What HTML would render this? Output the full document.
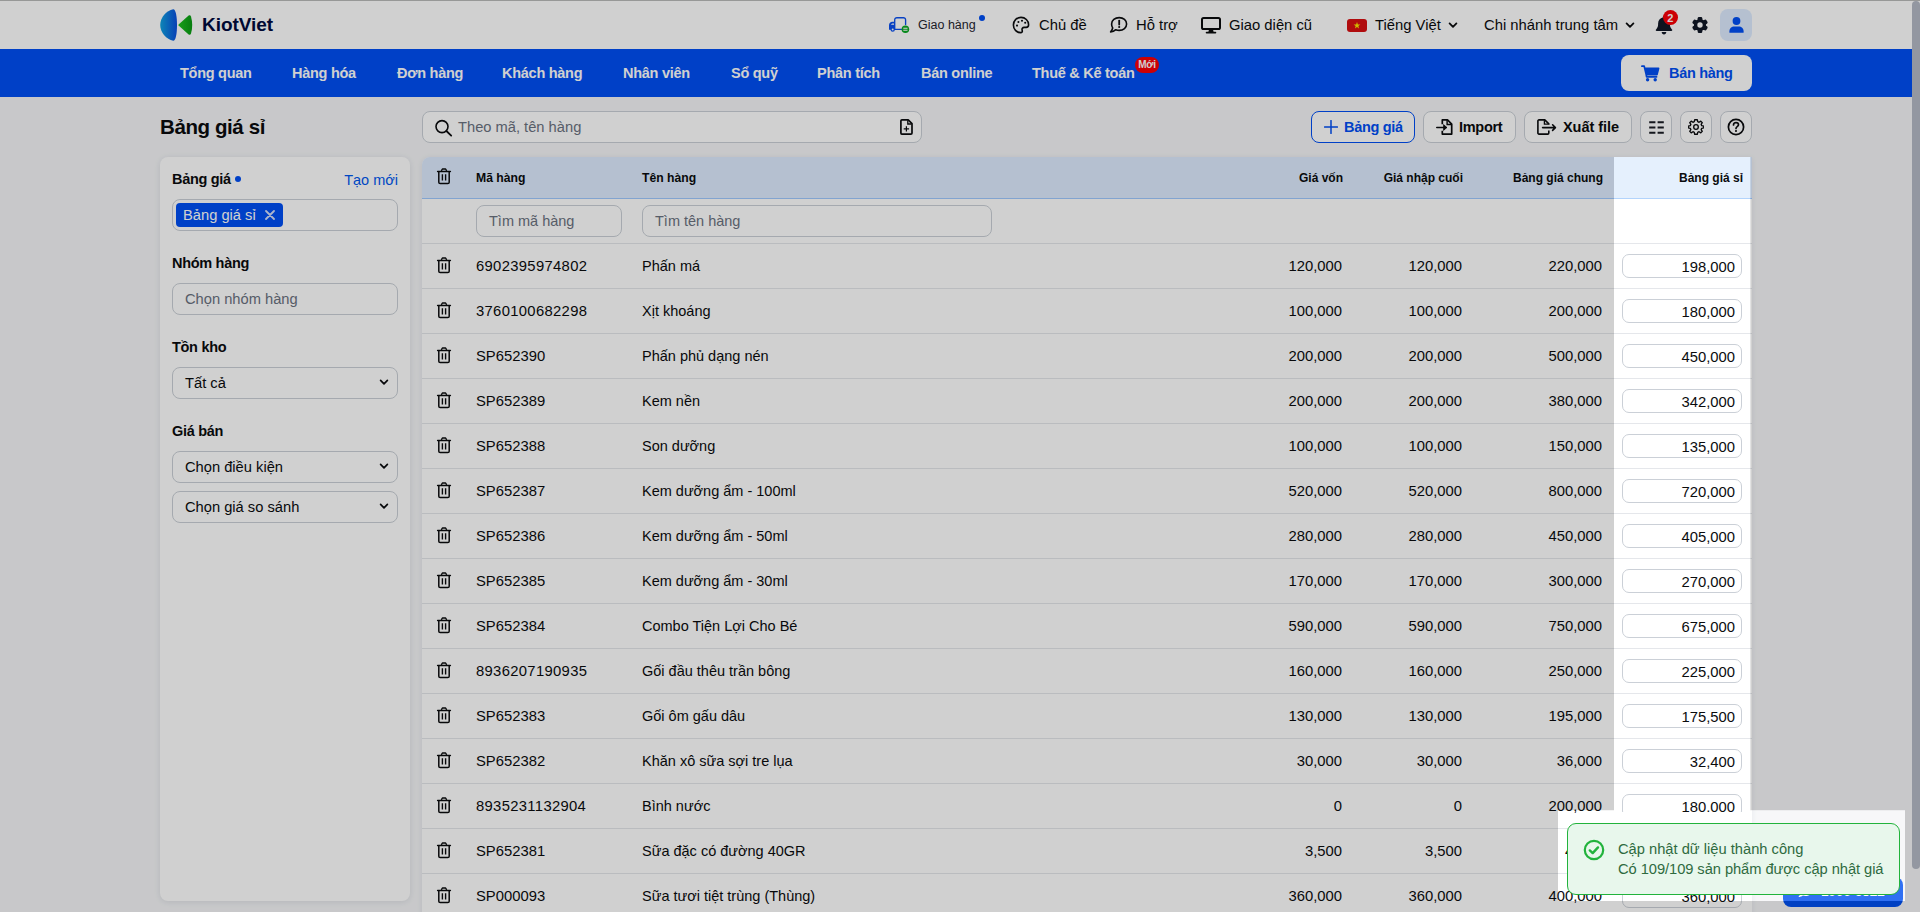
<!DOCTYPE html>
<html lang="vi">
<head>
<meta charset="utf-8">
<title>Bảng giá sỉ - KiotViet</title>
<style>
*{box-sizing:border-box}
html,body{margin:0;padding:0}
body{width:1920px;height:912px;overflow:hidden;position:relative;background:#f5f6f8;color:#0b0c0e;
 font-family:"Liberation Sans",Arial,sans-serif;font-size:14.8px;line-height:1}
.abs{position:absolute}
svg{display:block}
/* ---------- top header ---------- */
#topline{position:absolute;left:0;top:0;width:1920px;height:1px;background:#b9bbba}
#hdr{position:absolute;left:0;top:1px;width:1920px;height:48px;background:#fff}
#hdr .t{position:absolute;top:0;height:48px;line-height:48px;white-space:nowrap;font-size:14.8px;color:#0b0c0e}
#hdr .ic{position:absolute}
#nav{position:absolute;left:0;top:49px;width:1920px;height:48px;background:#004ff4}
#nav .m{position:absolute;top:0;height:48px;line-height:48px;font-weight:700;font-size:14.5px;letter-spacing:-.27px;color:#fff;white-space:nowrap}
#nav .badge{position:absolute;left:1135px;top:8px;width:24px;height:16px;border-radius:8px;background:#fb0007;color:#fff;font-size:10px;line-height:16px;text-align:center;letter-spacing:-.2px}
#sell{position:absolute;left:1621px;top:6px;width:131px;height:36px;border-radius:8px;background:#fff}
#sell span{position:absolute;left:48px;top:0;line-height:36px;font-weight:700;font-size:14.5px;letter-spacing:-.3px;color:#004ff4;white-space:nowrap}
/* ---------- toolbar ---------- */
#title{position:absolute;left:160px;top:111px;height:32px;line-height:32px;font-size:20.5px;letter-spacing:-.4px;font-weight:700;color:#0b0c0e;white-space:nowrap}
#search{position:absolute;left:422px;top:111px;width:500px;height:32px;border:1px solid #cbd0d7;border-radius:8px;background:#fff}
#search span{position:absolute;left:35px;top:0;line-height:30px;color:#6b7280;font-size:14.7px;white-space:nowrap}
.btn{position:absolute;top:111px;height:32px;border:1px solid #cbd0d7;border-radius:8px;background:#fff;font-weight:700;font-size:14.5px;letter-spacing:-.3px;color:#0b0c0e;white-space:nowrap}
.btn span{position:absolute;top:0;line-height:30px}
.btn.pri{border-color:#004ff4;color:#004ff4}
/* ---------- sidebar ---------- */
#side{position:absolute;left:160px;top:157px;width:250px;height:744px;border-radius:8px;background:#fff;box-shadow:0 1px 6px rgba(20,30,60,.10)}
#side .lb{position:absolute;left:12px;font-weight:700;font-size:14.5px;letter-spacing:-.3px;line-height:20px;white-space:nowrap}
#side .fld{position:absolute;left:12px;width:226px;height:32px;border:1px solid #cbd0d7;border-radius:8px;background:#fff}
#side .fld span{position:absolute;left:12px;top:0;line-height:30px;font-size:14.7px;white-space:nowrap}
#side .fld .ph{color:#6b7280}
#side .fld svg{position:absolute;right:8px;top:11px}
/* ---------- table ---------- */
#tbl{position:absolute;left:422px;top:157px;width:1330px;height:760px;background:#fff;border-radius:8px 0 0 0;overflow:hidden;box-shadow:0 1px 6px rgba(20,30,60,.08)}
#th{position:absolute;left:0;top:0;width:1330px;height:42px;background:#deecff;border-bottom:1px solid #a0caff}
#th .hl{position:absolute;left:1192px;top:0;width:136.4px;height:42px;background:#e5f0fd;border-bottom:1px solid #b3d4fc}
#th span{position:absolute;top:0;line-height:42px;font-weight:700;font-size:12.2px;white-space:nowrap;color:#0b0c0e}
.r{position:absolute;left:0;width:1330px;height:45px;border-bottom:1px solid #e5e7eb}
.r span{position:absolute;top:0;line-height:45px;white-space:nowrap;font-size:14.8px}
.r .c1{left:54px}.r .c1.d{letter-spacing:.33px}.r .c2{left:220px;font-size:14.5px}
.r .n1{right:410px}.r .n2{right:290px}.r .n3{right:150px}
.r i{position:absolute;left:1200px;top:10px;width:120px;height:24px;border:1px solid #cbd0d7;border-radius:7px;background:#fff;font-style:normal;text-align:right;padding-right:6px;line-height:24px;font-size:14.8px}
.r svg{position:absolute;left:14px;top:12.5px}
.finp{position:absolute;top:6px;height:32px;border:1px solid #cbd0d7;border-radius:8px;background:#fff}
.finp span{left:12px;line-height:30px!important;color:#6b7280;font-size:14.5px!important}
/* ---------- overlay / toast ---------- */
#dim{position:absolute;left:0;top:0;width:1920px;height:912px;background:rgba(0,0,0,.184);
 clip-path:path(evenodd,"M0 0H1920V912H0Z M1614 157H1750.4V810.3H1905V901H1558V810.3H1614Z")}
#lit{position:absolute;left:0;top:0;width:1920px;height:912px;background:rgba(255,255,255,.19);
 clip-path:path("M1750.4 810.3H1905V901H1750.4Z")}
#patch{position:absolute;left:1614px;top:811.6px;width:136.4px;height:12px;background:#fff}
#thumb{position:absolute;left:1912px;top:1px;width:8px;height:868px;border-radius:4px 4px 4px 4px;background:#9397a1}
#toast{position:absolute;left:1567px;top:823px;width:333px;height:72px;border:1px solid #22b33c;border-radius:9px;background:#e8f7ec;color:#2f6b3f}
#toast span{position:absolute;left:50px;white-space:nowrap;font-size:14.7px;line-height:20px}
#chat{position:absolute;left:1783px;top:877px;width:120px;height:30px;border-radius:8px;background:#004ff0;color:#fff}
</style>
</head>
<body>
<div id="topline"></div>
<div id="hdr">
  <!-- logo -->
  <svg class="ic" style="left:159px;top:7px" width="36" height="34" viewBox="0 0 36 34">
    <defs>
      <linearGradient id="lgb" x1="0" y1="0.5" x2="1" y2="0.5"><stop offset="0" stop-color="#11a3e0"/><stop offset="1" stop-color="#0a4fe0"/></linearGradient>
      <linearGradient id="lgg" x1="0" y1="0.5" x2="1" y2="0.5"><stop offset="0" stop-color="#1fc21f"/><stop offset="1" stop-color="#0a9a14"/></linearGradient>
    </defs>
    <path d="M14.2 1.2 C16.6 1.0 18.0 8 18.0 17 C18.0 26 16.6 33 14.2 32.8 C7.5 31.5 1.2 24.5 1.2 17 C1.2 9.5 7.5 2.5 14.2 1.2Z" fill="url(#lgb)"/>
    <path d="M19.6 17.6 C19.2 17.2 19.2 16.8 19.6 16.4 L29.6 7.6 C30.6 6.8 31.6 7.2 32 8.4 C33.6 13.6 33.6 20.4 32 25.6 C31.6 26.8 30.6 27.2 29.6 26.4Z" fill="url(#lgg)"/>
  </svg>
  <span class="t" id="brand" style="left:202px;font-weight:700;font-size:19px;color:#000a3d;letter-spacing:-.05px">KiotViet</span>

  <!-- giao hang -->
  <svg class="ic" style="left:888px;top:15px" width="22" height="18" viewBox="0 0 22 18" fill="none">
    <path d="M6.7 13.4 V3.9 a2.2 2.2 0 0 1 2.2-2.2 H15.4 a2.2 2.2 0 0 1 2.2 2.2 V8.6 M6.7 13.4 H13.6" stroke="#0a50f0" stroke-width="1.35" stroke-linecap="round"/>
    <path d="M6.4 5.8 H4.3 C2.6 5.8 1 7.4 1 9.1 V13.7 H6.4Z" fill="#0a50f0"/>
    <path d="M2.8 8.7 L4.1 7.4 H6 V8.7Z" fill="#fff"/>
    <circle cx="4.7" cy="13.5" r="2.2" fill="#0a50f0"/><circle cx="4.7" cy="13.5" r=".95" fill="#fff"/>
    <circle cx="17.4" cy="13.2" r="3.8" fill="#08a822"/>
    <path d="M15.3 12.3 H19.5 M15.3 14.2 H19.5" stroke="#fff" stroke-width="1.1"/>
  </svg>
  <span class="t" id="h1" style="left:918px;font-size:12.5px;color:#1f2630;top:0">Giao hàng</span>
  <div class="abs" style="left:979px;top:14px;width:6px;height:6px;border-radius:3px;background:#004ff4"></div>

  <!-- chu de -->
  <svg class="ic" style="left:1012px;top:15px" width="18" height="18" viewBox="0 0 18 18" fill="none">
    <path d="M9 1.4 C4.6 1.4 1.4 4.8 1.4 9 C1.4 13.2 4.6 16.6 8.6 16.6 C10 16.6 10.6 15.6 10.2 14.4 C9.6 12.8 10.6 11.4 12.2 11.4 H14.2 C15.8 11.4 16.6 10.4 16.6 8.8 C16.6 4.6 13.2 1.4 9 1.4Z" stroke="#0b0c0e" stroke-width="1.6"/>
    <circle cx="5" cy="9.6" r="1.05" fill="#0b0c0e"/><circle cx="6.4" cy="6" r="1.05" fill="#0b0c0e"/><circle cx="10" cy="4.7" r="1.05" fill="#0b0c0e"/><circle cx="13.2" cy="6.8" r="1.05" fill="#0b0c0e"/>
  </svg>
  <span class="t" id="h2" style="left:1039px">Chủ đề</span>

  <!-- ho tro -->
  <svg class="ic" style="left:1109px;top:15px" width="19" height="18" viewBox="0 0 19 18" fill="none">
    <path d="M10.2 1.6 C14.4 1.6 17.6 4.4 17.6 8 C17.6 11.6 14.4 14.4 10.2 14.4 C9 14.4 7.8 14.2 6.8 13.7 C5.6 14.8 3.8 15.8 1.6 16 C2.6 14.8 3.4 13.4 3.7 12 C2.9 10.9 2.6 9.5 2.6 8 C2.6 4.4 6 1.6 10.2 1.6Z" stroke="#0b0c0e" stroke-width="1.6" stroke-linejoin="round"/>
    <path d="M10.2 4.6 V8.6" stroke="#0b0c0e" stroke-width="1.8" stroke-linecap="round"/><circle cx="10.2" cy="11" r="1.05" fill="#0b0c0e"/>
  </svg>
  <span class="t" id="h3" style="left:1136px">Hỗ trợ</span>

  <!-- giao dien cu -->
  <svg class="ic" style="left:1201px;top:16px" width="20" height="17" viewBox="0 0 20 17" fill="none">
    <rect x="1" y="1" width="18" height="11" rx="1.6" stroke="#0b0c0e" stroke-width="2"/>
    <path d="M8 12.4 L7.4 15 H12.6 L12 12.4Z" fill="#0b0c0e"/><path d="M5.6 15.6 H14.4" stroke="#0b0c0e" stroke-width="1.8" stroke-linecap="round"/>
  </svg>
  <span class="t" id="h4" style="left:1229px">Giao diện cũ</span>

  <!-- language -->
  <svg class="ic" style="left:1347px;top:18px" width="20" height="13" viewBox="0 0 20 13">
    <rect width="20" height="13" rx="3" fill="#d80f12"/>
    <path d="M10 3.1 L10.85 5.55 H13.4 L11.35 7.1 L12.1 9.6 L10 8.1 L7.9 9.6 L8.65 7.1 L6.6 5.55 H9.15Z" fill="#ffe500"/>
  </svg>
  <span class="t" id="h5" style="left:1375px">Tiếng Việt</span>
  <svg class="ic" style="left:1448px;top:21px" width="10" height="7" viewBox="0 0 10 7" fill="none"><path d="M1.6 1.4 L5 4.8 L8.4 1.4" stroke="#0b0c0e" stroke-width="1.8" stroke-linecap="round" stroke-linejoin="round"/></svg>
  <span class="t" id="h6" style="left:1484px">Chi nhánh trung tâm</span>
  <svg class="ic" style="left:1625px;top:21px" width="10" height="7" viewBox="0 0 10 7" fill="none"><path d="M1.6 1.4 L5 4.8 L8.4 1.4" stroke="#0b0c0e" stroke-width="1.8" stroke-linecap="round" stroke-linejoin="round"/></svg>

  <!-- bell -->
  <svg class="ic" style="left:1655px;top:14px" width="18" height="20" viewBox="0 0 18 20">
    <path d="M9 .8 a1.2 1.2 0 0 1 1.2 1.2 v.5 c2.7 .6 4.7 3 4.7 5.9 v.9 c0 1.9 .6 3.6 1.8 4.9 l.3 .3 c.6 .7 .1 1.4 -.6 1.4 H1.6 c-.7 0 -1.2 -.7 -.6 -1.4 l.3 -.3 c1.2 -1.3 1.8 -3 1.8 -4.9 v-.9 c0 -2.9 2 -5.3 4.7 -5.9 v-.5 A1.2 1.2 0 0 1 9 .8Z M6.7 17 h4.6 c0 1.4 -1 2.5 -2.3 2.5 s-2.3 -1.1 -2.3 -2.5Z" fill="#111827"/>
  </svg>
  <div class="abs" style="left:1662.9px;top:9.4px;width:15px;height:15px;border-radius:7.5px;background:#fb0007;color:#fff;font-size:11px;line-height:16px;text-align:center;font-weight:700">2</div>

  <!-- gear -->
  <svg class="ic" style="left:1691.2px;top:15px" width="18" height="18" viewBox="-9 -9 18 18">
    <g fill="#111827"><circle r="6.1"/><rect x="-2.3" y="-8" width="4.6" height="16" rx="1.3"/><rect x="-2.3" y="-8" width="4.6" height="16" rx="1.3" transform="rotate(60)"/><rect x="-2.3" y="-8" width="4.6" height="16" rx="1.3" transform="rotate(120)"/></g>
    <circle r="2.7" fill="#fff"/>
  </svg>

  <!-- avatar -->
  <div class="abs" style="left:1720px;top:8px;width:32px;height:32px;border-radius:8px;background:#deecff"></div>
  <svg class="ic" style="left:1729px;top:16px" width="15" height="16" viewBox="0 0 15 16">
    <circle cx="7.5" cy="4" r="3.9" fill="#004ff4"/><path d="M.4 15.8 V14.2 C.4 11.4 2.6 9.4 5.4 9.4 H9.6 C12.4 9.4 14.6 11.4 14.6 14.2 V15.8Z" fill="#004ff4"/>
  </svg>
</div>

<div id="nav">
  <span class="m" id="m1" style="left:180px">Tổng quan</span>
  <span class="m" id="m2" style="left:292px">Hàng hóa</span>
  <span class="m" id="m3" style="left:397px">Đơn hàng</span>
  <span class="m" id="m4" style="left:502px">Khách hàng</span>
  <span class="m" id="m5" style="left:623px">Nhân viên</span>
  <span class="m" id="m6" style="left:731px">Sổ quỹ</span>
  <span class="m" id="m7" style="left:817px">Phân tích</span>
  <span class="m" id="m8" style="left:921px">Bán online</span>
  <span class="m" id="m9" style="left:1032px">Thuế &amp; Kế toán</span>
  <div class="badge"><b>Mới</b></div>
  <div id="sell">
    <svg class="abs" style="left:20px;top:10px" width="19" height="17" viewBox="0 0 19 17">
      <path d="M.9 1.2 H3.2 L3.7 3.4 M3.7 3.4 H17.6 L16 9.6 H5.2 Z M5.2 9.6 L5.6 11.8 H15.6" fill="none" stroke="#004ff4" stroke-width="1.7" stroke-linecap="round" stroke-linejoin="round"/>
      <path d="M3.9 3.6 H17.4 L15.9 9.4 H5.3Z" fill="#004ff4"/>
      <circle cx="6.6" cy="14.8" r="1.7" fill="#004ff4"/><circle cx="14.2" cy="14.8" r="1.7" fill="#004ff4"/>
    </svg>
    <span id="sellt">Bán hàng</span>
  </div>
</div>
<div id="title">Bảng giá sỉ</div>
<div id="search">
  <svg class="abs" style="left:11px;top:7px" width="19" height="18" viewBox="0 0 19 18" fill="none"><circle cx="8" cy="7.6" r="6" stroke="#0b0c0e" stroke-width="1.6"/><path d="M12.4 12 L17.2 16.6" stroke="#0b0c0e" stroke-width="1.8" stroke-linecap="round"/></svg>
  <span id="st">Theo mã, tên hàng</span>
  <svg class="abs" style="left:477px;top:7px" width="13" height="16" viewBox="0 0 13 16" fill="none"><path d="M1.9 .9 H8.2 L12 4.7 V14 a1.1 1.1 0 0 1-1.1 1.1 H1.9 A1.1 1.1 0 0 1 .9 14 V1.9 A1.1 1.1 0 0 1 1.9 .9Z" stroke="#0b0c0e" stroke-width="1.7" stroke-linejoin="round"/><path d="M7.8 1.2 V5 H11.6" stroke="#0b0c0e" stroke-width="1.3"/><path d="M6.4 7.2 V12.6 M3.7 9.9 H9.1" stroke="#0b0c0e" stroke-width="1.2"/></svg>
</div>

<div class="btn pri" style="left:1311px;width:104px">
  <svg class="abs" style="left:12px;top:8px" width="14" height="14" viewBox="0 0 14 14"><path d="M7 .6 V13.4 M.6 7 H13.4" stroke="#004ff4" stroke-width="1.5" stroke-linecap="round"/></svg>
  <span id="b1" style="left:32px">Bảng giá</span>
</div>
<div class="btn" style="left:1423px;width:93px">
  <svg class="abs" style="left:12px;top:7px" width="17" height="16" viewBox="0 0 17 16" fill="none"><path d="M6.3 5.3 V.9 H11.5 L15.7 5.1 V15.1 H6.3 V11.7" stroke="#0b0c0e" stroke-width="1.7" stroke-linejoin="round"/><path d="M11.1 1.1 V5.5 H15.5" stroke="#0b0c0e" stroke-width="1.4"/><path d="M.8 8.5 H10.2" stroke="#0b0c0e" stroke-width="1.6" stroke-linecap="round"/><path d="M7.6 5.6 L10.8 8.5 L7.6 11.4Z" fill="#0b0c0e" stroke="#0b0c0e" stroke-width=".8" stroke-linejoin="round"/></svg>
  <span id="b2" style="left:35px">Import</span>
</div>
<div class="btn" style="left:1524px;width:108px">
  <svg class="abs" style="left:12px;top:7px" width="20" height="16" viewBox="0 0 20 16" fill="none"><path d="M11.8 11.4 V14 a1.1 1.1 0 0 1-1.1 1.1 H2 A1.1 1.1 0 0 1 .9 14 V2 A1.1 1.1 0 0 1 2 .9 H7.8 L11.8 4.9 V5.8" stroke="#0b0c0e" stroke-width="1.6" stroke-linejoin="round"/><path d="M7.4 1.2 V5.2 H11.4" stroke="#0b0c0e" stroke-width="1.3"/><path d="M5.6 8.6 H18.4 M15.6 5.8 L18.4 8.6 L15.6 11.4" stroke="#0b0c0e" stroke-width="1.6" stroke-linecap="round" stroke-linejoin="round"/></svg>
  <span id="b3" style="left:38px;letter-spacing:-.05px">Xuất file</span>
</div>
<div class="btn" style="left:1640px;width:32px">
  <svg class="abs" style="left:8px;top:9px" width="15" height="13" viewBox="0 0 15 13"><path d="M.2 1.2 H6.4 M8.6 1.2 H14.8 M.2 6.5 H6.4 M8.6 6.5 H14.8 M.2 11.8 H6.4 M8.6 11.8 H14.8" stroke="#1a1d24" stroke-width="1.9"/></svg>
</div>
<div class="btn" style="left:1680px;width:32px">
  <svg class="abs" style="left:7px;top:7px" width="16" height="16" viewBox="0 0 18 18" fill="none">
    <path d="M7.55 1.3 H10.45 L10.95 3.55 L12.45 4.2 L14.4 2.95 L16.05 4.6 L14.8 6.55 L15.45 8.05 L17.7 8.55 V9.45 10.45 L15.45 10.95 L14.8 12.45 L16.05 14.4 L14.4 16.05 L12.45 14.8 L10.95 15.45 L10.45 17.7 H7.55 L7.05 15.45 L5.55 14.8 L3.6 16.05 L1.95 14.4 L3.2 12.45 L2.55 10.95 L.3 10.45 V8.55 L2.55 8.05 L3.2 6.55 L1.95 4.6 L3.6 2.95 L5.55 4.2 L7.05 3.55Z" stroke="#0b0c0e" stroke-width="1.5" stroke-linejoin="round" transform="translate(0 -.5)"/>
    <circle cx="9" cy="9" r="2.6" stroke="#0b0c0e" stroke-width="1.5"/>
  </svg>
</div>
<div class="btn" style="left:1720px;width:32px">
  <svg class="abs" style="left:6px;top:6px" width="18" height="18" viewBox="0 0 18 18" fill="none"><circle cx="9" cy="9" r="7.6" stroke="#0b0c0e" stroke-width="1.7"/><path d="M6.5 6.9 C6.5 5.4 7.6 4.6 9 4.6 C10.4 4.6 11.5 5.5 11.5 6.8 C11.5 8.6 9 8.6 9 10.4" stroke="#0b0c0e" stroke-width="1.7" stroke-linecap="round"/><circle cx="9" cy="13" r="1.05" fill="#0b0c0e"/></svg>
</div>

<div id="side">
  <span class="lb" id="s1" style="top:12px">Bảng giá</span>
  <div class="abs" style="left:75px;top:19px;width:6px;height:6px;border-radius:3px;background:#004ff4"></div>
  <span class="abs" id="s2" style="right:12px;top:13px;line-height:20px;font-size:14.5px;color:#0058f0;white-space:nowrap">Tạo mới</span>
  <div class="fld" style="top:42px">
    <div class="abs" style="left:3px;top:3px;width:107px;height:24px;border-radius:4px;background:#004ff4"></div>
    <span id="s3" style="left:10px;color:#fff;line-height:30px">Bảng giá sỉ</span>
    <svg style="left:92px;top:10px;right:auto" width="10" height="10" viewBox="0 0 10 10"><path d="M1 1 L9 9 M9 1 L1 9" stroke="#d4defa" stroke-width="1.8" stroke-linecap="round"/></svg>
  </div>
  <span class="lb" id="s4" style="top:96px">Nhóm hàng</span>
  <div class="fld" style="top:126px"><span class="ph" id="s5">Chọn nhóm hàng</span></div>
  <span class="lb" id="s6" style="top:180px">Tồn kho</span>
  <div class="fld" style="top:210px"><span id="s7">Tất cả</span><svg width="10" height="7" viewBox="0 0 10 7" fill="none"><path d="M1.6 1.4 L5 4.8 L8.4 1.4" stroke="#0b0c0e" stroke-width="1.7" stroke-linecap="round" stroke-linejoin="round"/></svg></div>
  <span class="lb" id="s8" style="top:264px">Giá bán</span>
  <div class="fld" style="top:294px"><span id="s9">Chọn điều kiện</span><svg width="10" height="7" viewBox="0 0 10 7" fill="none"><path d="M1.6 1.4 L5 4.8 L8.4 1.4" stroke="#0b0c0e" stroke-width="1.7" stroke-linecap="round" stroke-linejoin="round"/></svg></div>
  <div class="fld" style="top:334px"><span id="s10">Chọn giá so sánh</span><svg width="10" height="7" viewBox="0 0 10 7" fill="none"><path d="M1.6 1.4 L5 4.8 L8.4 1.4" stroke="#0b0c0e" stroke-width="1.7" stroke-linecap="round" stroke-linejoin="round"/></svg></div>
</div>
<div id="tbl">
<div id="th"><svg class="abs" style="left:14px;top:10.5px" width="16" height="17" viewBox="0 0 16 17" fill="none"><path d="M5.3 2.9 L6.4 1 H9.6 L10.7 2.9" stroke="#0b0c0e" stroke-width="1.4" stroke-linejoin="round"/><path d="M1.6 3.6 H14.4" stroke="#0b0c0e" stroke-width="1.5" stroke-linecap="round"/><path d="M2.8 4 V14.2 a1.4 1.4 0 0 0 1.4 1.4 H11.8 a1.4 1.4 0 0 0 1.4-1.4 V4" stroke="#0b0c0e" stroke-width="1.5"/><path d="M6.4 6.3 V12.5 M9.6 6.3 V12.5" stroke="#0b0c0e" stroke-width="1.4"/></svg><div class="hl"></div><span id="t1" style="left:54px">Mã hàng</span><span id="t2" style="left:220px">Tên hàng</span><span id="t3" style="right:409px;font-size:12px">Giá vốn</span><span id="t4" style="right:289px;font-size:12px">Giá nhập cuối</span><span id="t5" style="right:149px;font-size:12px">Bảng giá chung</span><span id="t6" style="right:9px;font-size:12px">Bảng giá sỉ</span></div>
<div class="r" style="top:42px"><div class="finp" style="left:54px;width:146px"><span id="f1">Tìm mã hàng</span></div><div class="finp" style="left:220px;width:350px"><span id="f2">Tìm tên hàng</span></div></div>
<div class="r" style="top:87px"><svg width="16" height="17" viewBox="0 0 16 17" fill="none"><path d="M5.3 2.9 L6.4 1 H9.6 L10.7 2.9" stroke="#0b0c0e" stroke-width="1.4" stroke-linejoin="round"/><path d="M1.6 3.6 H14.4" stroke="#0b0c0e" stroke-width="1.5" stroke-linecap="round"/><path d="M2.8 4 V14.2 a1.4 1.4 0 0 0 1.4 1.4 H11.8 a1.4 1.4 0 0 0 1.4-1.4 V4" stroke="#0b0c0e" stroke-width="1.5"/><path d="M6.4 6.3 V12.5 M9.6 6.3 V12.5" stroke="#0b0c0e" stroke-width="1.4"/></svg><span class="c1 d">6902395974802</span><span class="c2">Phấn má</span><span class="n1">120,000</span><span class="n2">120,000</span><span class="n3">220,000</span><i>198,000</i></div>
<div class="r" style="top:132px"><svg width="16" height="17" viewBox="0 0 16 17" fill="none"><path d="M5.3 2.9 L6.4 1 H9.6 L10.7 2.9" stroke="#0b0c0e" stroke-width="1.4" stroke-linejoin="round"/><path d="M1.6 3.6 H14.4" stroke="#0b0c0e" stroke-width="1.5" stroke-linecap="round"/><path d="M2.8 4 V14.2 a1.4 1.4 0 0 0 1.4 1.4 H11.8 a1.4 1.4 0 0 0 1.4-1.4 V4" stroke="#0b0c0e" stroke-width="1.5"/><path d="M6.4 6.3 V12.5 M9.6 6.3 V12.5" stroke="#0b0c0e" stroke-width="1.4"/></svg><span class="c1 d">3760100682298</span><span class="c2">Xịt khoáng</span><span class="n1">100,000</span><span class="n2">100,000</span><span class="n3">200,000</span><i>180,000</i></div>
<div class="r" style="top:177px"><svg width="16" height="17" viewBox="0 0 16 17" fill="none"><path d="M5.3 2.9 L6.4 1 H9.6 L10.7 2.9" stroke="#0b0c0e" stroke-width="1.4" stroke-linejoin="round"/><path d="M1.6 3.6 H14.4" stroke="#0b0c0e" stroke-width="1.5" stroke-linecap="round"/><path d="M2.8 4 V14.2 a1.4 1.4 0 0 0 1.4 1.4 H11.8 a1.4 1.4 0 0 0 1.4-1.4 V4" stroke="#0b0c0e" stroke-width="1.5"/><path d="M6.4 6.3 V12.5 M9.6 6.3 V12.5" stroke="#0b0c0e" stroke-width="1.4"/></svg><span class="c1">SP652390</span><span class="c2">Phấn phủ dạng nén</span><span class="n1">200,000</span><span class="n2">200,000</span><span class="n3">500,000</span><i>450,000</i></div>
<div class="r" style="top:222px"><svg width="16" height="17" viewBox="0 0 16 17" fill="none"><path d="M5.3 2.9 L6.4 1 H9.6 L10.7 2.9" stroke="#0b0c0e" stroke-width="1.4" stroke-linejoin="round"/><path d="M1.6 3.6 H14.4" stroke="#0b0c0e" stroke-width="1.5" stroke-linecap="round"/><path d="M2.8 4 V14.2 a1.4 1.4 0 0 0 1.4 1.4 H11.8 a1.4 1.4 0 0 0 1.4-1.4 V4" stroke="#0b0c0e" stroke-width="1.5"/><path d="M6.4 6.3 V12.5 M9.6 6.3 V12.5" stroke="#0b0c0e" stroke-width="1.4"/></svg><span class="c1">SP652389</span><span class="c2">Kem nền</span><span class="n1">200,000</span><span class="n2">200,000</span><span class="n3">380,000</span><i>342,000</i></div>
<div class="r" style="top:267px"><svg width="16" height="17" viewBox="0 0 16 17" fill="none"><path d="M5.3 2.9 L6.4 1 H9.6 L10.7 2.9" stroke="#0b0c0e" stroke-width="1.4" stroke-linejoin="round"/><path d="M1.6 3.6 H14.4" stroke="#0b0c0e" stroke-width="1.5" stroke-linecap="round"/><path d="M2.8 4 V14.2 a1.4 1.4 0 0 0 1.4 1.4 H11.8 a1.4 1.4 0 0 0 1.4-1.4 V4" stroke="#0b0c0e" stroke-width="1.5"/><path d="M6.4 6.3 V12.5 M9.6 6.3 V12.5" stroke="#0b0c0e" stroke-width="1.4"/></svg><span class="c1">SP652388</span><span class="c2">Son dưỡng</span><span class="n1">100,000</span><span class="n2">100,000</span><span class="n3">150,000</span><i>135,000</i></div>
<div class="r" style="top:312px"><svg width="16" height="17" viewBox="0 0 16 17" fill="none"><path d="M5.3 2.9 L6.4 1 H9.6 L10.7 2.9" stroke="#0b0c0e" stroke-width="1.4" stroke-linejoin="round"/><path d="M1.6 3.6 H14.4" stroke="#0b0c0e" stroke-width="1.5" stroke-linecap="round"/><path d="M2.8 4 V14.2 a1.4 1.4 0 0 0 1.4 1.4 H11.8 a1.4 1.4 0 0 0 1.4-1.4 V4" stroke="#0b0c0e" stroke-width="1.5"/><path d="M6.4 6.3 V12.5 M9.6 6.3 V12.5" stroke="#0b0c0e" stroke-width="1.4"/></svg><span class="c1">SP652387</span><span class="c2">Kem dưỡng ẩm - 100ml</span><span class="n1">520,000</span><span class="n2">520,000</span><span class="n3">800,000</span><i>720,000</i></div>
<div class="r" style="top:357px"><svg width="16" height="17" viewBox="0 0 16 17" fill="none"><path d="M5.3 2.9 L6.4 1 H9.6 L10.7 2.9" stroke="#0b0c0e" stroke-width="1.4" stroke-linejoin="round"/><path d="M1.6 3.6 H14.4" stroke="#0b0c0e" stroke-width="1.5" stroke-linecap="round"/><path d="M2.8 4 V14.2 a1.4 1.4 0 0 0 1.4 1.4 H11.8 a1.4 1.4 0 0 0 1.4-1.4 V4" stroke="#0b0c0e" stroke-width="1.5"/><path d="M6.4 6.3 V12.5 M9.6 6.3 V12.5" stroke="#0b0c0e" stroke-width="1.4"/></svg><span class="c1">SP652386</span><span class="c2">Kem dưỡng ẩm - 50ml</span><span class="n1">280,000</span><span class="n2">280,000</span><span class="n3">450,000</span><i>405,000</i></div>
<div class="r" style="top:402px"><svg width="16" height="17" viewBox="0 0 16 17" fill="none"><path d="M5.3 2.9 L6.4 1 H9.6 L10.7 2.9" stroke="#0b0c0e" stroke-width="1.4" stroke-linejoin="round"/><path d="M1.6 3.6 H14.4" stroke="#0b0c0e" stroke-width="1.5" stroke-linecap="round"/><path d="M2.8 4 V14.2 a1.4 1.4 0 0 0 1.4 1.4 H11.8 a1.4 1.4 0 0 0 1.4-1.4 V4" stroke="#0b0c0e" stroke-width="1.5"/><path d="M6.4 6.3 V12.5 M9.6 6.3 V12.5" stroke="#0b0c0e" stroke-width="1.4"/></svg><span class="c1">SP652385</span><span class="c2">Kem dưỡng ẩm - 30ml</span><span class="n1">170,000</span><span class="n2">170,000</span><span class="n3">300,000</span><i>270,000</i></div>
<div class="r" style="top:447px"><svg width="16" height="17" viewBox="0 0 16 17" fill="none"><path d="M5.3 2.9 L6.4 1 H9.6 L10.7 2.9" stroke="#0b0c0e" stroke-width="1.4" stroke-linejoin="round"/><path d="M1.6 3.6 H14.4" stroke="#0b0c0e" stroke-width="1.5" stroke-linecap="round"/><path d="M2.8 4 V14.2 a1.4 1.4 0 0 0 1.4 1.4 H11.8 a1.4 1.4 0 0 0 1.4-1.4 V4" stroke="#0b0c0e" stroke-width="1.5"/><path d="M6.4 6.3 V12.5 M9.6 6.3 V12.5" stroke="#0b0c0e" stroke-width="1.4"/></svg><span class="c1">SP652384</span><span class="c2">Combo Tiện Lợi Cho Bé</span><span class="n1">590,000</span><span class="n2">590,000</span><span class="n3">750,000</span><i>675,000</i></div>
<div class="r" style="top:492px"><svg width="16" height="17" viewBox="0 0 16 17" fill="none"><path d="M5.3 2.9 L6.4 1 H9.6 L10.7 2.9" stroke="#0b0c0e" stroke-width="1.4" stroke-linejoin="round"/><path d="M1.6 3.6 H14.4" stroke="#0b0c0e" stroke-width="1.5" stroke-linecap="round"/><path d="M2.8 4 V14.2 a1.4 1.4 0 0 0 1.4 1.4 H11.8 a1.4 1.4 0 0 0 1.4-1.4 V4" stroke="#0b0c0e" stroke-width="1.5"/><path d="M6.4 6.3 V12.5 M9.6 6.3 V12.5" stroke="#0b0c0e" stroke-width="1.4"/></svg><span class="c1 d">8936207190935</span><span class="c2">Gối đầu thêu trần bông</span><span class="n1">160,000</span><span class="n2">160,000</span><span class="n3">250,000</span><i>225,000</i></div>
<div class="r" style="top:537px"><svg width="16" height="17" viewBox="0 0 16 17" fill="none"><path d="M5.3 2.9 L6.4 1 H9.6 L10.7 2.9" stroke="#0b0c0e" stroke-width="1.4" stroke-linejoin="round"/><path d="M1.6 3.6 H14.4" stroke="#0b0c0e" stroke-width="1.5" stroke-linecap="round"/><path d="M2.8 4 V14.2 a1.4 1.4 0 0 0 1.4 1.4 H11.8 a1.4 1.4 0 0 0 1.4-1.4 V4" stroke="#0b0c0e" stroke-width="1.5"/><path d="M6.4 6.3 V12.5 M9.6 6.3 V12.5" stroke="#0b0c0e" stroke-width="1.4"/></svg><span class="c1">SP652383</span><span class="c2">Gối ôm gấu dâu</span><span class="n1">130,000</span><span class="n2">130,000</span><span class="n3">195,000</span><i>175,500</i></div>
<div class="r" style="top:582px"><svg width="16" height="17" viewBox="0 0 16 17" fill="none"><path d="M5.3 2.9 L6.4 1 H9.6 L10.7 2.9" stroke="#0b0c0e" stroke-width="1.4" stroke-linejoin="round"/><path d="M1.6 3.6 H14.4" stroke="#0b0c0e" stroke-width="1.5" stroke-linecap="round"/><path d="M2.8 4 V14.2 a1.4 1.4 0 0 0 1.4 1.4 H11.8 a1.4 1.4 0 0 0 1.4-1.4 V4" stroke="#0b0c0e" stroke-width="1.5"/><path d="M6.4 6.3 V12.5 M9.6 6.3 V12.5" stroke="#0b0c0e" stroke-width="1.4"/></svg><span class="c1">SP652382</span><span class="c2">Khăn xô sữa sợi tre lụa</span><span class="n1">30,000</span><span class="n2">30,000</span><span class="n3">36,000</span><i>32,400</i></div>
<div class="r" style="top:627px"><svg width="16" height="17" viewBox="0 0 16 17" fill="none"><path d="M5.3 2.9 L6.4 1 H9.6 L10.7 2.9" stroke="#0b0c0e" stroke-width="1.4" stroke-linejoin="round"/><path d="M1.6 3.6 H14.4" stroke="#0b0c0e" stroke-width="1.5" stroke-linecap="round"/><path d="M2.8 4 V14.2 a1.4 1.4 0 0 0 1.4 1.4 H11.8 a1.4 1.4 0 0 0 1.4-1.4 V4" stroke="#0b0c0e" stroke-width="1.5"/><path d="M6.4 6.3 V12.5 M9.6 6.3 V12.5" stroke="#0b0c0e" stroke-width="1.4"/></svg><span class="c1 d">8935231132904</span><span class="c2">Bình nước</span><span class="n1">0</span><span class="n2">0</span><span class="n3">200,000</span><i>180,000</i></div>
<div class="r" style="top:672px"><svg width="16" height="17" viewBox="0 0 16 17" fill="none"><path d="M5.3 2.9 L6.4 1 H9.6 L10.7 2.9" stroke="#0b0c0e" stroke-width="1.4" stroke-linejoin="round"/><path d="M1.6 3.6 H14.4" stroke="#0b0c0e" stroke-width="1.5" stroke-linecap="round"/><path d="M2.8 4 V14.2 a1.4 1.4 0 0 0 1.4 1.4 H11.8 a1.4 1.4 0 0 0 1.4-1.4 V4" stroke="#0b0c0e" stroke-width="1.5"/><path d="M6.4 6.3 V12.5 M9.6 6.3 V12.5" stroke="#0b0c0e" stroke-width="1.4"/></svg><span class="c1">SP652381</span><span class="c2">Sữa đặc có đường 40GR</span><span class="n1">3,500</span><span class="n2">3,500</span><span class="n3">4,000</span><i>3,600</i></div>
<div class="r" style="top:717px"><svg width="16" height="17" viewBox="0 0 16 17" fill="none"><path d="M5.3 2.9 L6.4 1 H9.6 L10.7 2.9" stroke="#0b0c0e" stroke-width="1.4" stroke-linejoin="round"/><path d="M1.6 3.6 H14.4" stroke="#0b0c0e" stroke-width="1.5" stroke-linecap="round"/><path d="M2.8 4 V14.2 a1.4 1.4 0 0 0 1.4 1.4 H11.8 a1.4 1.4 0 0 0 1.4-1.4 V4" stroke="#0b0c0e" stroke-width="1.5"/><path d="M6.4 6.3 V12.5 M9.6 6.3 V12.5" stroke="#0b0c0e" stroke-width="1.4"/></svg><span class="c1">SP000093</span><span class="c2">Sữa tươi tiệt trùng (Thùng)</span><span class="n1">360,000</span><span class="n2">360,000</span><span class="n3">400,000</span><i>360,000</i></div>
</div>

<div id="chat">
  <svg class="abs" style="left:14px;top:6px" width="17" height="15" viewBox="0 0 18 16"><path d="M9 1 C13.4 1 17 3.8 17 7.4 C17 11 13.4 13.8 9 13.8 C8 13.8 7 13.6 6.2 13.4 C5 14.4 3.2 15 1.4 15 C2.4 14 3 12.8 3.2 11.8 C1.8 10.6 1 9.1 1 7.4 C1 3.8 4.6 1 9 1Z" fill="#fff"/></svg>
  <span class="abs" style="left:38px;top:0;line-height:29.5px;font-weight:700;font-size:13.5px;white-space:nowrap">1900 6522</span>
</div>
<div id="dim"></div>
<div id="lit"></div>
<div id="patch"></div>
<div id="thumb"></div>
<div id="toast">
  <svg class="abs" style="left:15px;top:15px" width="22" height="22" viewBox="0 0 22 22" fill="none"><circle cx="11" cy="11" r="9.2" stroke="#22b33c" stroke-width="2.2"/><path d="M6.8 11.4 L9.7 14.1 L15 8.4" stroke="#22b33c" stroke-width="2.4" stroke-linecap="round" stroke-linejoin="round"/></svg>
  <span id="to1" style="top:15px">Cập nhật dữ liệu thành công</span>
  <span id="to2" style="top:35px;letter-spacing:-.06px">Có 109/109 sản phẩm được cập nhật giá</span>
</div>
</body>
</html>
